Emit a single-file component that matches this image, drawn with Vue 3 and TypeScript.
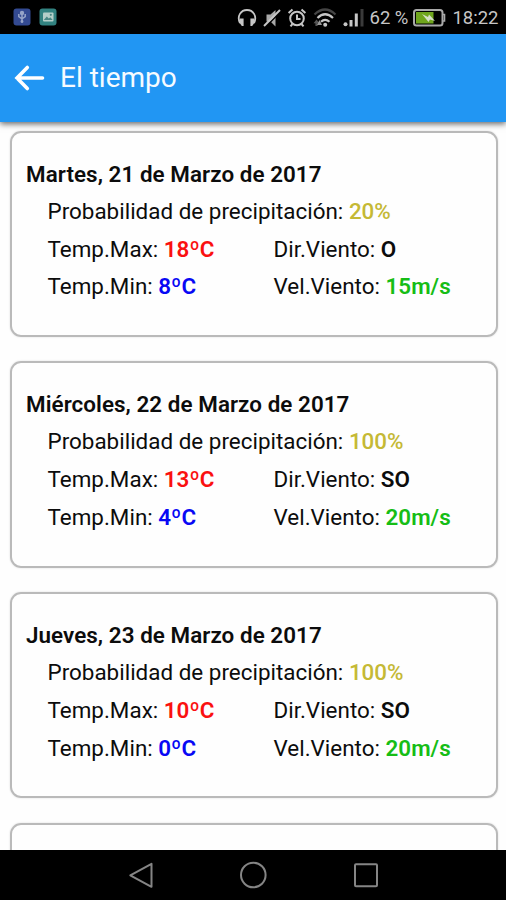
<script setup lang="ts">
interface Forecast {
  date: string
  rain: string
  max: string
  min: string
  windDir: string
  windSpeed: string
}

const days: Forecast[] = [
  { date: 'Martes, 21 de Marzo de 2017', rain: '20%', max: '18ºC', min: '8ºC', windDir: 'O', windSpeed: '15m/s' },
  { date: 'Miércoles, 22 de Marzo de 2017', rain: '100%', max: '13ºC', min: '4ºC', windDir: 'SO', windSpeed: '20m/s' },
  { date: 'Jueves, 23 de Marzo de 2017', rain: '100%', max: '10ºC', min: '0ºC', windDir: 'SO', windSpeed: '20m/s' },
]
</script>

<template>
  <div class="screen">
    <div class="status">
      <div class="notifications">
        <svg width="18" height="18" viewBox="0 0 18 18">
          <rect x="0.5" y="0.5" width="17" height="17" rx="3" fill="#334a92" />
          <path d="M9 14.5V4M5.8 6v2.5L9 10.8l3.2-2.3V6" fill="none" stroke="#96a4c8" stroke-width="1.5" />
          <circle cx="9" cy="5" r="2.2" fill="#96a4c8" />
          <circle cx="9" cy="13.5" r="1.4" fill="#96a4c8" />
        </svg>
        <svg width="18" height="18" viewBox="0 0 18 18">
          <rect x="0.5" y="0.5" width="17" height="17" rx="3" fill="#328280" />
          <rect x="4" y="4.5" width="10.5" height="9" rx="1" fill="#b5cfc9" />
          <path d="M4.8 12l3-3.5 2 2 1.5-1.2 2.4 2.7z" fill="#4b8885" />
          <circle cx="11.8" cy="6.8" r="1.1" fill="#4b8885" />
        </svg>
      </div>
      <div class="indicators">
        <svg class="headset" width="20" height="20" viewBox="0 0 20 20">
          <path d="M3 15.2C-.5 8 4 2 10 2s10.5 6 7 13.2" fill="none" stroke="#c6c6c6" stroke-width="1.8" />
          <path d="M3 10.5h3.600v7.500H4.800L2 14zM17 10.500h-3.600v7.500h1.800L18 14z" fill="#c6c6c6" />
        </svg>
        <svg class="mute" width="20" height="20" viewBox="0 0 20 20">
          <path d="M4.500 6.500h4l5-4.500v16.500L8.500 13.500h-4z" fill="#a9a9a9" />
          <path d="M3.300 19.200L19 3.200" stroke="#000" stroke-width="1.500" />
          <path d="M2 18L18 2" stroke="#c6c6c6" stroke-width="2" />
        </svg>
        <svg class="alarm" width="20" height="20" viewBox="0 0 20 20">
          <g fill="none" stroke="#c6c6c6" stroke-width="2">
            <circle cx="10" cy="10.500" r="6.800" />
            <path d="M10 6.500V11h3.500M1.600 5L5.500 1.500M18.400 5L14.500 1.500M5.500 16l-2 2.300M14.500 16l2 2.300" />
          </g>
        </svg>
        <svg class="wifi" width="24" height="20" viewBox="0 0 24 20">
          <g fill="none" stroke-width="2.200">
            <path d="M1.500 6.500Q12-3.500 22.500 6.500" stroke="#444" />
            <path d="M4.500 10Q12 2.500 20 10M8 13.800q4-4 8.500 0" stroke="#c6c6c6" />
          </g>
          <circle cx="12.200" cy="16.800" r="2" fill="#c6c6c6" />
          <path d="M3.500 11.500l3 3.700H4.600V18H2.400v-2.800H.500z" fill="#555" />
          <path d="M6.500 12l2.500 5H4z" fill="#999" />
        </svg>
        <svg class="signal" width="22" height="20" viewBox="0 0 22 20">
          <circle cx="2.500" cy="16.300" r="2" fill="#c6c6c6" />
          <path d="M6.500 12h3v6.500h-3zM11.800 5.500h3v13h-3z" fill="#c6c6c6" />
          <path d="M17.500 1h3v17.500h-3z" fill="#3a3a3a" />
        </svg>
        <span class="percent">62 %</span>
        <svg class="battery" width="34" height="20" viewBox="0 0 34 20">
          <rect x="1" y="2" width="28.500" height="15.500" rx="2.500" fill="#000" stroke="#a9a9a9" stroke-width="2" />
          <path d="M29.500 6.500h2v6.500h-2" fill="none" stroke="#a9a9a9" stroke-width="1.600" />
          <rect x="3" y="4" width="17.500" height="11.500" fill="#6fa51d" />
          <path d="M9 6l6 3 1-2.500 6 6.500-5-1.500-1.500 2.500z" fill="#d5dfc8" />
        </svg>
        <span class="clock">18:22</span>
      </div>
    </div>

    <header class="toolbar">
      <svg width="32" height="28" viewBox="0 0 32 28">
        <path d="M28.500 14H3M13.300 3.500L3 14l10.300 10.500" fill="none" stroke="#fff" stroke-width="3.600" stroke-linecap="round" stroke-linejoin="miter" />
      </svg>
      <h1>El tiempo</h1>
    </header>

    <main class="content">
      <section v-for="day in days" :key="day.date" class="card">
        <h2>{{ day.date }}</h2>
        <div class="details">
          <p class="wide">Probabilidad de precipitación: <b class="rain">{{ day.rain }}</b></p>
          <p>Temp.Max: <b class="max">{{ day.max }}</b></p>
          <p>Dir.Viento: <b>{{ day.windDir }}</b></p>
          <p>Temp.Min: <b class="min">{{ day.min }}</b></p>
          <p>Vel.Viento: <b class="speed">{{ day.windSpeed }}</b></p>
        </div>
      </section>
      <section class="card"></section>
    </main>

    <nav class="navbar">
      <svg width="28" height="28" viewBox="0 0 28 28"><path d="M3.300 14.300L24.500 2.800v23z" /></svg>
      <svg width="28" height="28" viewBox="0 0 28 28"><circle cx="14.300" cy="14" r="12.300" /></svg>
      <svg width="28" height="28" viewBox="0 0 28 28"><rect x="3" y="3.300" width="22" height="22" rx="1" /></svg>
    </nav>
  </div>
</template>

<style>
body {
  margin: 0;
  background: #fefefe;
}
</style>

<style scoped>
.screen {
  display: flex;
  flex-direction: column;
  width: 506px;
  height: 900px;
  overflow: hidden;
  background: #fefefe;
  color: #0c0c0c;
  font-family: Roboto, "Liberation Sans", sans-serif;
}
.status {
  display: flex;
  flex: none;
  justify-content: space-between;
  box-sizing: border-box;
  height: 34px;
  padding: 8px 7.500px 0 13px;
  background: #000;
  color: #c6c6c6;
}
.notifications {
  display: flex;
  gap: 8px;
}
.indicators {
  display: flex;
  align-items: flex-start;
  font-size: 18.500px;
  line-height: 21px;
}
.mute { margin-left: 5px; }
.alarm { margin-left: 5px; }
.wifi { margin-left: 6px; }
.signal { margin-left: 6px; }
.percent { margin-left: 4px; }
.battery { margin-left: 5px; }
.clock { margin-left: 5px; }
.toolbar {
  display: flex;
  flex: none;
  align-items: center;
  box-sizing: border-box;
  height: 88px;
  padding: 0 14px;
  gap: 14px;
  background: #2196f3;
  box-shadow: 0 2px 6px rgba(0, 0, 0, 0.6);
  color: #f6fbff;
  z-index: 1;
}
h1 {
  margin: 0;
  font-size: 28px;
  font-weight: 400;
  line-height: 34px;
}
.content {
  display: flex;
  flex: 1;
  flex-direction: column;
  gap: 24.300px;
  min-height: 0;
  padding: 8.500px 8.500px 0 10px;
  overflow: hidden;
}
.card {
  flex: none;
  box-sizing: border-box;
  height: 206.400px;
  padding: 23.300px 14px 0;
  border: 2px solid #bababa;
  border-radius: 11px;
  box-shadow: 0 0 2px rgba(0, 0, 0, 0.15);
}
h2 {
  margin: 0;
  font-size: 22.400px;
  font-weight: 600;
  letter-spacing: 0.060px;
  line-height: 37px;
  white-space: nowrap;
}
.details {
  display: grid;
  grid-template-columns: 226px 1fr;
  grid-auto-rows: 37.800px;
  padding-left: 21.500px;
  font-size: 22.400px;
  line-height: 37.800px;
  letter-spacing: 0.020px;
  white-space: nowrap;
}
p { margin: 0; }
.wide { grid-column: span 2; }
b { font-weight: 600; }
.rain {
  color: #c5b935;
  font-weight: 500;
}
.max { color: #fa1010; }
.min { color: #0808f4; }
.speed { color: #16bd16; }
.navbar {
  display: flex;
  flex: none;
  justify-content: center;
  align-items: center;
  gap: 84.500px;
  height: 50px;
  background: #000;
}
.navbar svg {
  fill: none;
  stroke: #858585;
  stroke-width: 2;
  stroke-linejoin: round;
}
</style>
